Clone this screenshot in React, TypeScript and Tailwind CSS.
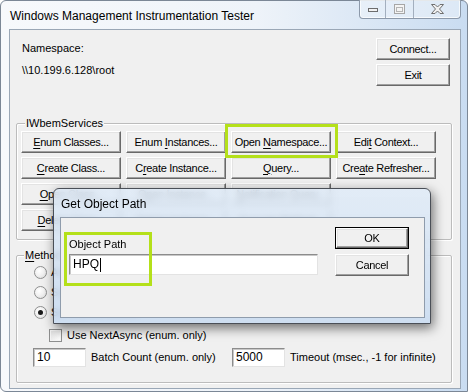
import React from "react";

function Btn({ children, className = "" }: { children: React.ReactNode; className?: string }) {
  return (
    <div
      className={`h-[22px] flex items-center justify-center bg-[#f0f0f0] border border-t-white border-l-white border-r-[#696969] border-b-[#696969] shadow-[inset_-1px_-1px_0_#a0a0a0,inset_1px_1px_0_#e3e3e3] text-[11px] tracking-[-0.3px] text-black whitespace-nowrap ${className}`}
    >
      <span>{children}</span>
    </div>
  );
}

function U({ children }: { children: React.ReactNode }) {
  return <span className="underline underline-offset-[2px] decoration-[1px]">{children}</span>;
}

function Radio({ checked = false }: { checked?: boolean }) {
  return (
    <div className="w-[13px] h-[13px] rounded-full border border-[#8e8f8f] bg-[radial-gradient(circle_at_40%_35%,#ffffff_0%,#f0f0f0_50%,#d8d8d8_100%)] flex items-center justify-center">
      {checked && <div className="w-[5px] h-[5px] rounded-full bg-[#1a1a1a]" />}
    </div>
  );
}

function TextBox({ value, className = "" }: { value: string; className?: string }) {
  return (
    <div
      className={`bg-white border border-t-[#8c8c8c] border-l-[#8c8c8c] border-r-[#e3e3e3] border-b-[#e3e3e3] shadow-[inset_1px_1px_0_#c8c8c8] flex items-center pl-[3px] text-[12px] text-black ${className}`}
    >
      {value}
    </div>
  );
}

export default function App() {
  return (
    <div className="w-[468px] h-[392px] bg-white relative overflow-hidden font-['Liberation_Sans',Arial,sans-serif] text-black">
      {/* Main window */}
      <div className="w-[468px] h-[392px] flex flex-col rounded-t-[6px] rounded-bl-[6px] border border-[#7b8796] bg-[linear-gradient(90deg,#f7f9fc_0%,#eef3f9_55%,#c9dcf1_100%)]">
        {/* Title bar */}
        <div className="h-[28px] flex items-start justify-between">
          <div className="pl-[9px] pt-[8px] text-[12px] leading-[14px]">Windows Management Instrumentation Tester</div>
          <div className="flex -mt-[1px] mr-[6px] h-[19px] border border-t-0 border-[#8c99aa] rounded-b-[4px] bg-[rgba(255,255,255,0.35)] shadow-[inset_0_0_0_1px_rgba(255,255,255,0.7)]">
            <div className="w-[26px] flex items-center justify-center border-r border-[#a3afbe] pt-[2px]">
              <svg width="12" height="6" viewBox="0 0 12 6">
                <rect x="1.5" y="1.5" width="9" height="3" fill="#f2f2f2" stroke="#6d6d6d" />
              </svg>
            </div>
            <div className="w-[28px] flex items-center justify-center border-r border-[#a3afbe]">
              <svg width="11" height="10" viewBox="0 0 11 10">
                <rect x="0.5" y="0.5" width="10" height="9" fill="#f4f4f4" stroke="#a6a6a6" />
                <rect x="2.5" y="3.5" width="6" height="4" fill="none" stroke="#b5b5b5" />
              </svg>
            </div>
            <div className="w-[46px] flex items-center justify-center">
              <svg width="15" height="12" viewBox="0 0 15 12">
                <path
                  d="M1.5,1.5 H5 L7.5,4 L10,1.5 H13.5 L9.5,6 L13.5,10.5 H10 L7.5,8 L5,10.5 H1.5 L5.5,6 Z"
                  fill="#f0f0f0"
                  stroke="#6f6f6f"
                  strokeLinejoin="round"
                />
              </svg>
            </div>
          </div>
        </div>

        {/* Client area */}
        <div className="ml-[8px] mr-[6px] mb-[2px] flex-1 border border-[#9aa7b6] bg-[#f0f0f0] flex flex-col text-[11px] leading-[13px]">
          <div className="flex h-[93px]">
            <div className="flex-1 pl-[12px] pt-[12px] flex flex-col gap-[9px]">
              <div>Namespace:</div>
              <div>\\10.199.6.128\root</div>
            </div>
            <div className="pt-[8px] pr-[10px] flex flex-col gap-[4px]">
              <Btn className="w-[74px]">Connect...</Btn>
              <Btn className="w-[74px]">Exit</Btn>
            </div>
          </div>

          {/* IWbemServices group */}
          <div className="relative ml-[6px] w-[436px] border border-[#bcbcbc] rounded-[2px] shadow-[inset_1px_1px_0_#ffffff,1px_1px_0_#ffffff] pt-[7px] pl-[4px] pb-[8px]">
            <span className="absolute -top-[7px] left-[8px] bg-[#f0f0f0] px-[1px]">IWbemServices</span>
            <div className="grid grid-cols-[100px_100px_100px_100px] gap-x-[5px] gap-y-[4px]">
              <Btn><U>E</U>num Classes...</Btn>
              <Btn>Enum <U>I</U>nstances...</Btn>
              <Btn>Open <U>N</U>amespace...</Btn>
              <Btn>Edi<U>t</U> Context...</Btn>
              <Btn><U>C</U>reate Class...</Btn>
              <Btn>C<U>r</U>eate Instance...</Btn>
              <Btn><U>Q</U>uery...</Btn>
              <Btn>Cre<U>a</U>te Refresher...</Btn>
              <Btn><U>O</U>pen Class...</Btn>
              <Btn>O<U>p</U>en Instance...</Btn>
              <Btn><U>N</U>otification Query...</Btn>
              <div />
              <Btn><U>D</U>elete Class...</Btn>
              <Btn>De<U>l</U>ete Instance...</Btn>
              <Btn>E<U>x</U>ecute Method...</Btn>
              <div />
            </div>
          </div>

          {/* Method group */}
          <div className="relative mt-[15px] ml-[6px] w-[436px] h-[128px] border border-[#bcbcbc] rounded-[2px] shadow-[inset_1px_1px_0_#ffffff,1px_1px_0_#ffffff] pt-[8px] flex flex-col">
            <span className="absolute -top-[7px] left-[7px] bg-[#f0f0f0] px-[1px]">
              <U>M</U>ethod Invocation Options
            </span>
            <div className="pl-[17px] flex flex-col gap-[4px]">
              <div className="h-[16px] flex items-center gap-[4px]"><Radio /><span>Asynchronous</span></div>
              <div className="h-[16px] flex items-center gap-[4px]"><Radio /><span>Synchronous</span></div>
              <div className="h-[16px] flex items-center gap-[4px]"><Radio checked /><span>Semisynchronous</span></div>
            </div>
            <div className="pl-[32px] mt-[8px] h-[14px] flex items-center gap-[5px]">
              <div className="w-[13px] h-[13px] border border-[#8e8f8f] bg-[linear-gradient(135deg,#dcdcdc,#ffffff)] shadow-[inset_0_0_0_1px_#f4f4f4]" />
              <span>Use NextAsync (enum. only)</span>
            </div>
            <div className="pl-[16px] mt-[6px] flex items-center">
              <TextBox value="10" className="w-[53px] h-[19px]" />
              <span className="w-[146px] pl-[5px]">Batch Count (enum. only)</span>
              <TextBox value="5000" className="w-[53px] h-[19px]" />
              <span className="pl-[5px]">Timeout (msec., -1 for infinite)</span>
            </div>
          </div>
        </div>
      </div>

      {/* Dialog */}
      <div className="absolute left-[53px] top-[188px] w-[378px] h-[136px] flex flex-col rounded-t-[6px] border border-[#4a4f57] bg-[linear-gradient(180deg,rgba(222,234,247,0.82),rgba(200,219,241,0.85))] backdrop-blur-[3px] shadow-[2px_4px_12px_rgba(0,0,0,0.55)]">
        <div className="h-[28px] pl-[7px] pt-[8px] text-[12px] leading-[14px]">Get Object Path</div>
        <div className="ml-[6px] mr-[5px] h-[101px] border border-[#8f9cac] bg-[#f0f0f0] flex text-[11px] leading-[13px]">
          <div className="pl-[8px] pt-[20px] flex flex-col gap-[3px]">
            <div>Object Path</div>
            <div className="w-[249px] h-[21px] bg-white border border-t-[#8c8c8c] border-l-[#8c8c8c] border-r-[#e3e3e3] border-b-[#e3e3e3] shadow-[inset_1px_1px_0_#c8c8c8] flex items-center pl-[3px] text-[12px]">
              HPQ<span className="ml-[1px] w-[1px] h-[14px] bg-black" />
            </div>
          </div>
          <div className="pl-[17px] pt-[9px] flex flex-col gap-[5px]">
            <div className="w-[74px] h-[22px] border border-black">
              <Btn className="w-full h-full">OK</Btn>
            </div>
            <Btn className="w-[74px]">Cancel</Btn>
          </div>
        </div>
      </div>

      {/* Green highlight overlays */}
      <div className="absolute left-[225px] top-[124px] w-[113px] h-[34px] border-[3px] border-[#b4e01a]" />
      <div className="absolute left-[64px] top-[232px] w-[88px] h-[54px] border-[3px] border-[#b4e01a]" />
    </div>
  );
}
